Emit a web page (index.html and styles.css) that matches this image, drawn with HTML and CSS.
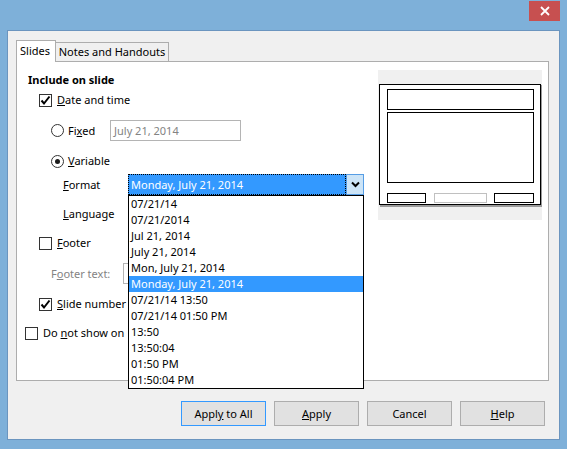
FILE: index.html
```html
<!DOCTYPE html>
<html>
<head>
<meta charset="utf-8">
<link rel="stylesheet" href="styles.css">
</head>
<body>
<div class="window">
  <div class="titlebar">
    <div class="close">
      <svg width="10" height="10" viewBox="0 0 10 10"><path d="M1 1 L9 9 M9 1 L1 9" stroke="#fff" stroke-width="1.8" fill="none"/></svg>
    </div>
  </div>
  <div class="client">
    <div class="tabs">
      <div class="tab active">Slides</div>
      <div class="tab">Notes and Handouts</div>
    </div>
    <div class="panel">
      <div class="form">
        <div class="heading">Include on slide</div>
        <div class="row ind-check gap4">
          <span class="cb checked"><svg width="11" height="11" viewBox="0 0 11 11"><path d="M1.5 5.5 L4 8.5 L9.5 1.5" stroke="#000" stroke-width="2" fill="none"/></svg></span>
          <span class="lbl"><u>D</u>ate and time</span>
        </div>
        <div class="row tall ind-radio gap12">
          <span class="radio-label"><span class="radio"></span><span class="lbl">Fi<u>x</u>ed</span></span>
          <span class="input disabled fixed-input">July 21, 2014</span>
        </div>
        <div class="row ind-radio gap12">
          <span class="radio-label"><span class="radio on"></span><span class="lbl"><u>V</u>ariable</span></span>
        </div>
        <div class="row tall ind-field gap5">
          <span class="field-label"><u>F</u>ormat</span>
          <div class="combo focused">
            <span class="combo-text">Monday, July 21, 2014</span>
            <span class="combo-btn"><svg width="9" height="7" viewBox="0 0 9 7"><path d="M1 1.5 L4.5 5 L8 1.5" stroke="#000" stroke-width="2" fill="none"/></svg></span>
            <ul class="popup">
              <li>07/21/14</li>
              <li>07/21/2014</li>
              <li>Jul 21, 2014</li>
              <li>July 21, 2014</li>
              <li>Mon, July 21, 2014</li>
              <li class="sel">Monday, July 21, 2014</li>
              <li>07/21/14 13:50</li>
              <li>07/21/14 01:50 PM</li>
              <li>13:50</li>
              <li>13:50:04</li>
              <li>01:50 PM</li>
              <li>01:50:04 PM</li>
            </ul>
          </div>
        </div>
        <div class="row tall ind-field gap8">
          <span class="field-label"><u>L</u>anguage</span>
          <div class="combo">
            <span class="combo-text"></span>
          </div>
        </div>
        <div class="row ind-check gap11">
          <span class="cb"></span>
          <span class="lbl"><u>F</u>ooter</span>
        </div>
        <div class="row tall ind-radio gap12">
          <span class="footer-label grey">F<u>o</u>oter text:</span>
          <span class="input disabled footer-input"></span>
        </div>
        <div class="row ind-check gap12">
          <span class="cb checked"><svg width="11" height="11" viewBox="0 0 11 11"><path d="M1.5 5.5 L4 8.5 L9.5 1.5" stroke="#000" stroke-width="2" fill="none"/></svg></span>
          <span class="lbl"><u>S</u>lide number</span>
        </div>
        <div class="row ind-outer gap13">
          <span class="cb"></span>
          <span class="lbl clipped">Do <u>n</u>ot show on first slide</span>
        </div>
      </div>
      <div class="preview">
        <svg width="164" height="150" viewBox="0 0 164 150">
          <rect x="2" y="15" width="162" height="122" fill="#9a9a9a"/>
          <rect x="1.5" y="14.5" width="161" height="120" fill="#fff" stroke="#000" stroke-width="1"/>
          <rect x="9.5" y="19.5" width="146" height="20" fill="none" stroke="#000" stroke-width="1"/>
          <rect x="9.5" y="42.5" width="146" height="70" fill="none" stroke="#000" stroke-width="1"/>
          <rect x="9.5" y="123.5" width="38" height="9" fill="none" stroke="#000" stroke-width="1"/>
          <rect x="56.5" y="123.5" width="52" height="9" fill="none" stroke="#c0c0c0" stroke-width="1"/>
          <rect x="116.5" y="123.5" width="39" height="9" fill="none" stroke="#000" stroke-width="1"/>
        </svg>
      </div>
    </div>
    <div class="buttons">
      <button class="btn default">Appl<u>y</u> to All</button>
      <button class="btn"><u>A</u>pply</button>
      <button class="btn">Cancel</button>
      <button class="btn"><u>H</u>elp</button>
    </div>
  </div>
</div>
</body>
</html>
```
FILE: styles.css
```css
html, body {
  margin: 0;
  padding: 0;
}
body {
  font-family: "Noto Sans", "Open Sans", sans-serif;
  font-size: 11px;
  color: #000;
  background: #7eb0d9;
}
u {
  text-decoration: underline;
  text-underline-offset: 1px;
}
.window {
  width: 567px;
  height: 449px;
  background: #7eb0d9;
  display: flex;
  flex-direction: column;
  box-sizing: border-box;
}
.titlebar {
  height: 30px;
  display: flex;
  justify-content: flex-end;
  align-items: flex-start;
  padding-right: 7px;
  flex: none;
}
.close {
  width: 31px;
  height: 20px;
  margin-top: 1px;
  background: #c75050;
  display: flex;
  align-items: center;
  justify-content: center;
}
.close svg { display: block; }
.client {
  margin: 0 7px;
  height: 410px;
  border: 1px solid #6b95bf;
  background: #f0f0f0;
  box-sizing: border-box;
  padding: 9px 10px 0 8px;
  flex: none;
}
.tabs {
  display: flex;
  align-items: flex-end;
  height: 22px;
  margin-bottom: -1px;
  position: relative;
  z-index: 1;
}
.tab {
  height: 20px;
  box-sizing: border-box;
  border: 1px solid #adadad;
  border-left: none;
  background: #f0f0f0;
  width: 113px;
  line-height: 17px;
  text-align: center;
  white-space: nowrap;
}
.tab.active {
  height: 22px;
  width: 40px;
  border-left: 1px solid #adadad;
  border-bottom: none;
  background: #fff;
  line-height: 20px;
  text-align: left;
  padding-left: 3px;
}
.panel {
  width: 533px;
  height: 320px;
  border: 1px solid #adadad;
  background: #fff;
  box-sizing: border-box;
  display: flex;
  align-items: flex-start;
}
.form {
  flex: 1;
  padding-top: 10px;
  position: relative;
}
.heading {
  font-weight: bold;
  line-height: 16px;
  height: 16px;
  padding-left: 11px;
}
.row {
  display: flex;
  align-items: center;
  height: 16px;
  line-height: 16px;
  white-space: nowrap;
}
.row > * { flex: none; }
.row.tall { height: 21px; }
.gap4 { margin-top: 4px; }
.gap5 { margin-top: 5px; }
.gap8 { margin-top: 8px; }
.gap11 { margin-top: 11px; }
.gap12 { margin-top: 12px; }
.gap13 { margin-top: 13px; }
.ind-outer { padding-left: 8px; }
.ind-check { padding-left: 22px; }
.ind-radio { padding-left: 34px; }
.ind-field { padding-left: 46px; }
.cb {
  width: 13px;
  height: 13px;
  box-sizing: border-box;
  border: 1px solid #333;
  background: #fff;
  margin-right: 5px;
  display: flex;
  align-items: center;
  justify-content: center;
}
.cb svg { display: block; }
.clipped {
  width: 84px;
  overflow: hidden;
}
.radio-label {
  display: flex;
  align-items: center;
  width: 59px;
}
.radio {
  width: 13px;
  height: 13px;
  box-sizing: border-box;
  border: 1px solid #333;
  border-radius: 50%;
  background: #fff;
  margin-right: 4px;
  flex: none;
  display: flex;
  align-items: center;
  justify-content: center;
}
.radio.on::after {
  content: "";
  width: 5px;
  height: 5px;
  border-radius: 50%;
  background: #1a1a1a;
}
.input {
  height: 21px;
  box-sizing: border-box;
  border: 1px solid #adadad;
  background: #fff;
  line-height: 19px;
  padding-left: 3px;
}
.input.disabled { color: #838383; border-color: #b4b4b4; }
.fixed-input { width: 131px; }
.field-label { width: 65px; }
.footer-label { width: 72px; }
.footer-input { width: 230px; border-color: #d9d9d9; }
.grey { color: #838383; }
.combo {
  position: relative;
  width: 236px;
  height: 21px;
  display: flex;
  box-sizing: border-box;
}
.combo-text {
  flex: 1;
  box-sizing: border-box;
  height: 21px;
  line-height: 19px;
  padding-left: 2px;
  border: 1px solid #adadad;
  background: #fff;
}
.combo.focused .combo-text {
  background: #3399ff;
  color: #fff;
  border: 1px dotted #000;
}
.combo-btn {
  width: 18px;
  height: 21px;
  box-sizing: border-box;
  border: 1px solid #569de5;
  background: #cce4f7;
  display: flex;
  align-items: center;
  justify-content: center;
}
.combo-btn svg { display: block; }
.popup {
  position: absolute;
  left: 0;
  top: 21px;
  width: 236px;
  margin: 0;
  padding: 0;
  list-style: none;
  border: 1px solid #000;
  background: #fff;
  box-sizing: border-box;
  z-index: 5;
}
.popup li {
  height: 16px;
  line-height: 16px;
  padding-left: 2px;
  white-space: nowrap;
}
.popup li.sel {
  background: #3399ff;
  color: #fff;
}
.preview {
  width: 164px;
  height: 150px;
  margin: 8px 6px 0 0;
  background: #f0f0f0;
  flex: none;
}
.preview svg { display: block; }
.buttons {
  display: flex;
  justify-content: flex-end;
  gap: 8px;
  margin-top: 20px;
  margin-right: 4px;
}
.btn {
  width: 85px;
  height: 25px;
  box-sizing: border-box;
  border: 1px solid #adadad;
  background: #e1e1e1;
  font-family: inherit;
  font-size: 11px;
  color: #000;
  padding: 0;
  margin: 0;
  border-radius: 0;
}
.btn.default { border-color: #3399ff; }
```
